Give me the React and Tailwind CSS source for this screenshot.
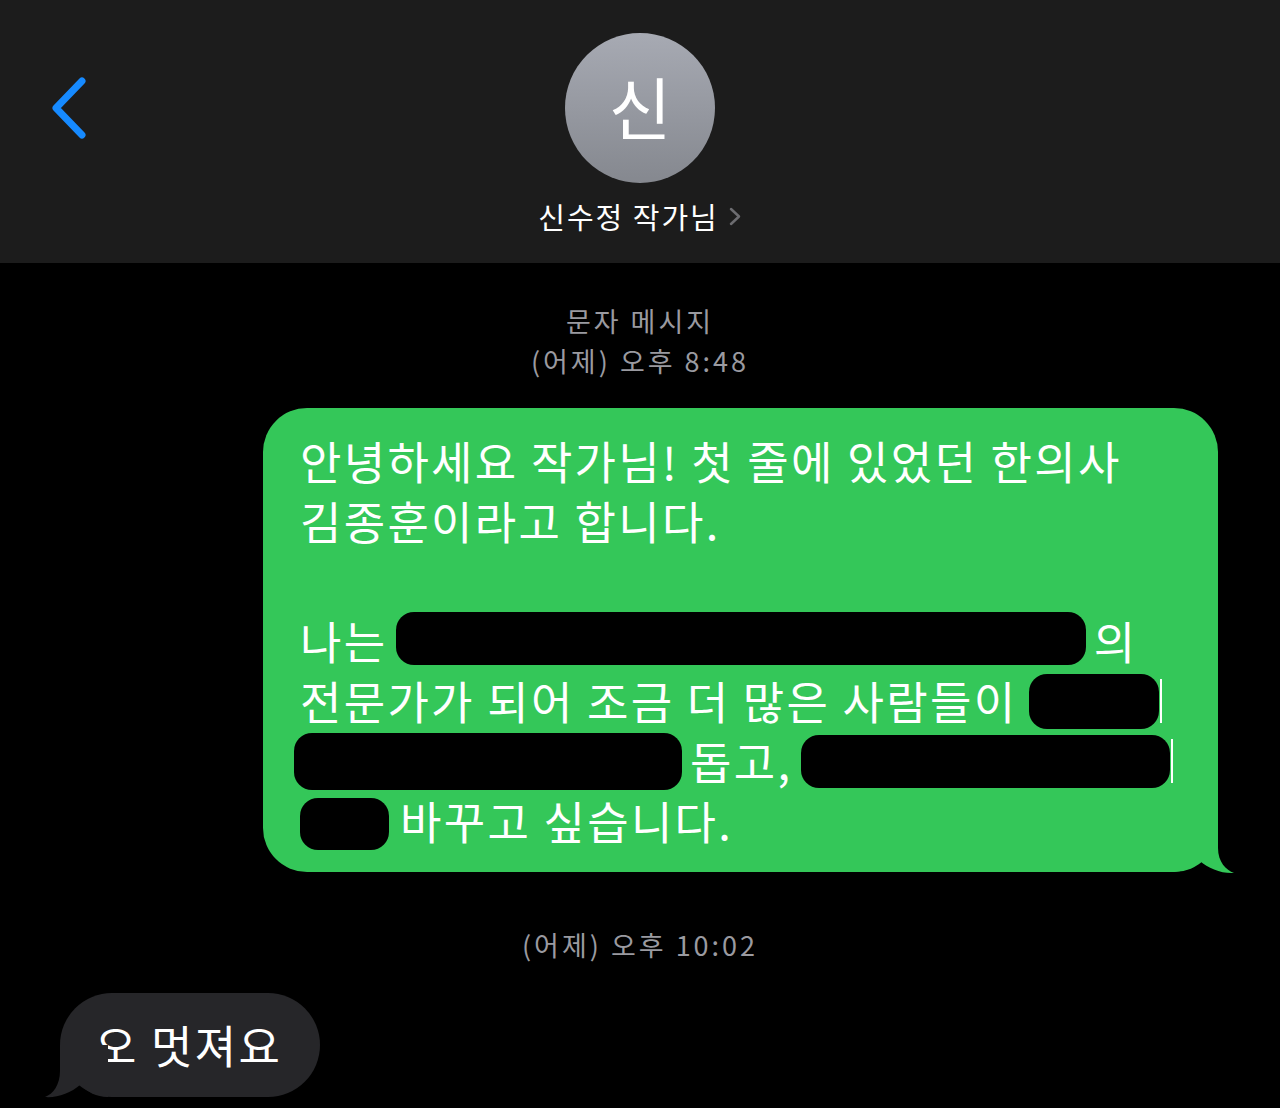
import React from "react";

const font = "font-['Noto_Sans_CJK_KR','Noto_Sans',sans-serif]";

// black redaction mark over part of the message
const Redact = ({ className }) => (
    <span className={`inline-block bg-black rounded-[18px] ${className}`} />
);

// leftover sliver of a redacted glyph
const Sliver = ({ className }) => (
    <span className={`inline-block bg-white w-[2px] h-[44px] ${className}`} />
);

const Header = () => (
    <header className="h-[263px] bg-[#1c1c1c] grid grid-cols-[1fr_auto_1fr]">
        <div className="pl-[46px] pt-[74px]">
            <svg width="44" height="66" viewBox="0 0 44 66" fill="none">
                <polyline
                    points="36,7 10,34 36,61"
                    stroke="#168aff"
                    strokeWidth="7"
                    strokeLinecap="round"
                    strokeLinejoin="round"
                />
            </svg>
        </div>

        <div className="flex flex-col items-center pt-[33px]">
            <div className="w-[150px] h-[150px] rounded-full bg-gradient-to-b from-[#a7aab3] to-[#85888f] flex items-center justify-center">
                <span className="text-white text-[68px] leading-none font-normal pb-[4px]">신</span>
            </div>
            <div className="mt-[16px] flex items-center gap-[10px] text-white text-[29px] leading-[34px] tracking-[2px]">
                <span>신수정 작가님</span>
                <svg width="13" height="19" viewBox="0 0 13 19" fill="none">
                    <polyline
                        points="2,2 10,9.5 2,17"
                        stroke="#6c6c70"
                        strokeWidth="2.5"
                        strokeLinecap="round"
                        strokeLinejoin="round"
                    />
                </svg>
            </div>
        </div>

        <div />
    </header>
);

const SentBubble = () => (
    <div className="relative self-end mr-[62px] w-[955px] bg-[#34c759] rounded-[44px] pl-[37px] pt-[23px] pb-[21px] text-white text-[45px] leading-[60px] tracking-[2.3px]">
        <div className="h-[60px] flex items-center whitespace-pre">안녕하세요 작가님! 첫 줄에 있었던 한의사</div>
        <div className="h-[60px] flex items-center whitespace-pre">김종훈이라고 합니다.</div>
        <div className="h-[60px]" />
        <div className="h-[60px] flex items-center whitespace-pre">
            <span>나는 </span>
            <Redact className="-ml-[4px] w-[690px] h-[53px] -mt-[5px]" />
            <span className="ml-[8px]">의</span>
        </div>
        <div className="h-[60px] flex items-center whitespace-pre">
            <span>전문가가 되어 조금 더 많은 사람들이</span>
            <Redact className="ml-[12px] w-[130px] h-[55px]" />
            <Sliver className="ml-[1px]" />
        </div>
        <div className="h-[60px] flex items-center whitespace-pre">
            <Redact className="-ml-[6px] w-[388px] h-[57px]" />
            <span className="ml-[8px]">돕고,</span>
            <Redact className="ml-[9px] w-[369px] h-[53px]" />
            <Sliver className="ml-[1px]" />
        </div>
        <div className="h-[60px] flex items-center whitespace-pre">
            <Redact className="w-[89px] h-[52px] rounded-[16px] mt-[6px]" />
            <span className="ml-[11px]">바꾸고 싶습니다.</span>
        </div>

        {/* tail */}
        <svg className="absolute right-[-18px] bottom-[-2px]" width="66" height="54" viewBox="0 0 66 54">
            <path d="M0,0 L48,0 L48,28 C48,42 56,50 64,53 C52,54 38,48 30,41 C22,48 14,52 0,52 Z" fill="#34c759" />
        </svg>
    </div>
);

const ReceivedBubble = () => (
    <div className="relative ml-[60px] w-[260px] h-[104px] rounded-full bg-[#262629] flex items-center pl-[35px] text-white text-[45px] leading-none tracking-[2.3px]">
        <span className="pb-[2px]">오 멋져요</span>
        {/* tail */}
        <svg className="absolute left-[-18px] top-[52px]" width="66" height="54" viewBox="0 0 66 54">
            <path d="M66,0 L18,0 L18,26 C18,40 11,49 3,52 C15,53 29,48 38,40 C46,47 54,52 66,52 Z" fill="#262629" />
        </svg>
    </div>
);

export default function App() {
    return (
        <div className={`w-[1280px] h-[1108px] bg-black overflow-hidden ${font}`}>
            <Header />

            <main className="flex flex-col">
                <div className="mt-[38px] text-center text-[#9a9aa0] text-[27px] leading-[40px] tracking-[3px]">
                    <div>문자 메시지</div>
                    <div>(어제) 오후 8:48</div>
                </div>

                <div className="mt-[27px] flex flex-col">
                    <SentBubble />
                </div>

                <div className="mt-[53px] text-center text-[#9a9aa0] text-[27px] leading-[40px] tracking-[3px]">
                    (어제) 오후 10:02
                </div>

                <div className="mt-[28px]">
                    <ReceivedBubble />
                </div>
            </main>
        </div>
    );
}
